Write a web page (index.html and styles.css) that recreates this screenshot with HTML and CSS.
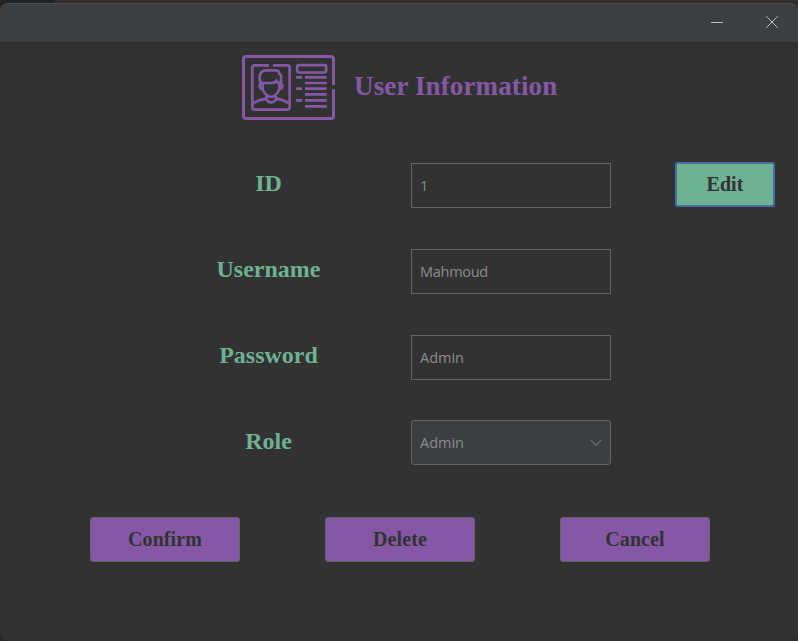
FILE: index.html
```
<!DOCTYPE html>
<html lang="en">
<head>
<meta charset="utf-8">
<title>User Information</title>
<link rel="stylesheet" href="styles.css">
</head>
<body>
<div class="window">
  <header class="titlebar">
    <svg class="minimize" viewBox="0 0 12 13"><path d="M0 6.500h12"/></svg>
    <svg class="close" viewBox="0 0 12 12"><path d="M.3.3l11.400 11.400M11.700.3L.3 11.700"/></svg>
  </header>
  <main>
    <div class="heading">
      <svg class="card-icon" viewBox="18 21 279 195">
        <path class="frame" d="M292.500 111V33Q292.500 25.500 285 25.500H30Q22.500 25.500 22.500 33V204Q22.500 211.500 30 211.500H285Q292.500 211.500 292.500 204V124"/>
        <path d="M99 52H56Q49 52 49 59V178Q49 185 56 185H154Q161 185 161 178V59Q161 52 154 52H111"/>
        <path d="M75 106Q67 87 75 74Q80 66 94 67H116Q130 67 130 78Q138 81 135 91V107M75 105H106Q117 105 121 99Q125 105 131 106M80 105V124Q83 134 93 142Q105 151 117 142Q127 134 130 124V105M77 106Q70 107 71 115Q72 123 79 123M132 106Q140 107 139 115Q138 123 131 123M91 144V155Q105 173 120 155V144M91 152Q65 156 50 167M120 152Q145 156 160 167"/>
        <rect x="183.500" y="51.500" width="87" height="22" rx="6"/>
        <path d="M180 88h18M180 122h18M180 157h18M207 88h65M207 105h65M207 122h65M207 139h65M207 157h65M207 175h65"/>
      </svg>
      <h1>User Information</h1>
    </div>
    <form class="fields">
      <div class="row"><label>ID</label><div class="field">1</div><button type="button" class="btn edit">Edit</button></div>
      <div class="row"><label>Username</label><div class="field name">Mahmoud</div></div>
      <div class="row"><label>Password</label><div class="field">Admin</div></div>
      <div class="row role"><label>Role</label><div class="field select"><span>Admin</span><svg viewBox="0 0 12 7"><path d="M.5.7L6 6.200 11.500.7"/></svg></div></div>
    </form>
    <div class="actions">
      <button class="btn">Confirm</button>
      <button class="btn">Delete</button>
      <button class="btn">Cancel</button>
    </div>
  </main>
</div>
</body>
</html>
```
FILE: styles.css
```
* { box-sizing: border-box; }
body {
  margin: 0;
  height: 641px;
  padding-top: 3px;
  overflow: hidden;
  background: linear-gradient(90deg, #242424 55px, #302f2e 55px);
  font-family: "Liberation Serif", serif;
}
.window {
  height: 638px;
  background: #323232;
  border-radius: 8px;
  overflow: hidden;
}
.titlebar {
  height: 39px;
  background: #3c3f41;
  border-top: 1px solid #4a4c4d;
  border-radius: 8px 8px 0 0;
  display: flex;
  justify-content: flex-end;
  align-items: center;
  gap: 43px;
  padding: 0 20px 2px 0;
}
.titlebar svg { fill: none; stroke: #c0c1c2; stroke-width: 1; }
.minimize { width: 12px; height: 13px; }
.close { width: 12px; height: 12px; }
.heading {
  display: flex;
  align-items: center;
  height: 65px;
  margin: 13px 0 0 242px;
  gap: 19px;
}
.card-icon {
  width: 93px;
  height: 65px;
  fill: none;
  stroke: #8558a5;
  stroke-width: 8;
}
.card-icon .frame { stroke-width: 9; }
h1 {
  margin: 0;
  padding-bottom: 3px;
  font-size: 27px;
  line-height: 30px;
  letter-spacing: .13px;
  color: #8558a5;
  white-space: nowrap;
}
.fields { margin-top: 43px; }
.row {
  display: grid;
  grid-template-columns: 143px 200px 100px;
  column-gap: 71px;
  padding-left: 197px;
  height: 86px;
  align-items: start;
}
.edit { margin: -1px 0 0 -7px; }
.row.role { height: 97px; margin-top: -1px; }
.role label { padding-top: 1px; }
label {
  color: #6eb193;
  font-size: 24px;
  font-weight: bold;
  line-height: 40px;
  text-align: center;
}
.field {
  height: 45px;
  border: 1px solid #646464;
  color: #8c8c8c;
  font: 14.500px/43px "Open Sans", sans-serif;
  padding: 0 8px;
}
.name { letter-spacing: -.28px; }
.select {
  display: flex;
  align-items: center;
  justify-content: space-between;
  background: #3c3f41;
  border-radius: 3px;
}
.select svg { width: 12px; height: 7px; fill: none; stroke: #6b6d6e; stroke-width: 1.200; }
.btn {
  width: 150px;
  height: 45px;
  padding: 0;
  border: 1px solid #646464;
  border-radius: 3px;
  background: #8558a5;
  color: #323232;
  font: bold 20px/43px "Liberation Serif", serif;
  letter-spacing: .1px;
}
.btn.edit {
  width: 100px;
  border: 2px solid #4470a4;
  background: #6eb193;
  line-height: 41px;
}
.actions { display: flex; gap: 85px; padding-left: 90px; }
```
